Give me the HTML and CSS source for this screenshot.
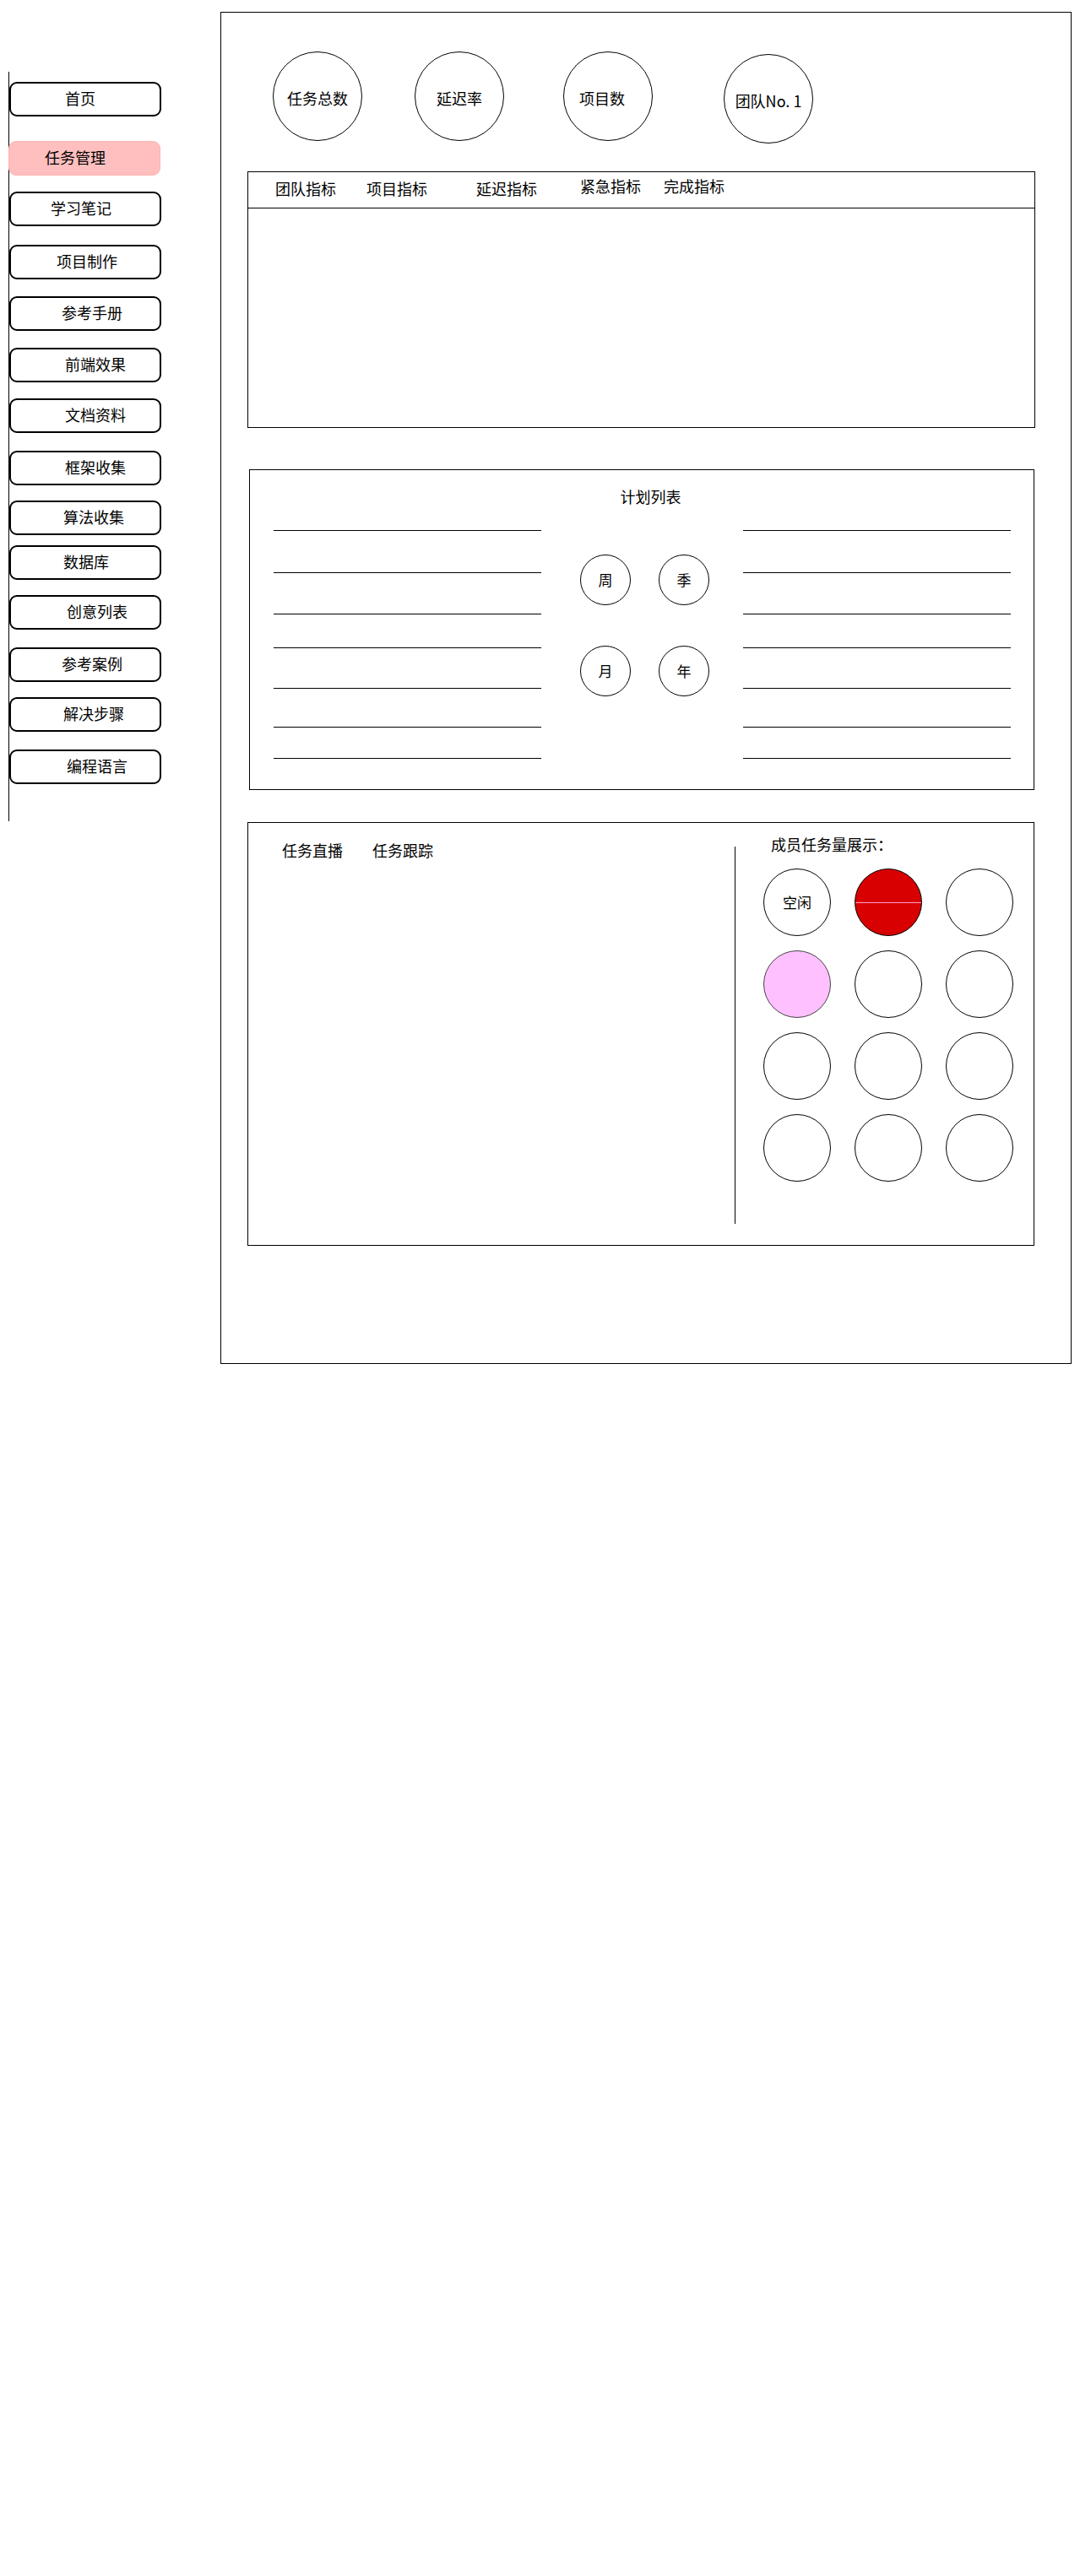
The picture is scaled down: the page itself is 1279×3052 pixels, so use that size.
FILE: index.html
```html
<!DOCTYPE html>
<html lang="zh-CN">
<head>
<meta charset="utf-8">
<title>任务管理</title>
<link rel="stylesheet" href="styles.css">
</head>
<body>
<div class="page">
  <nav class="sidebar">
    <div class="nav-item">首页</div>
    <div class="nav-item active">任务管理</div>
    <div class="nav-item">学习笔记</div>
    <div class="nav-item">项目制作</div>
    <div class="nav-item">参考手册</div>
    <div class="nav-item">前端效果</div>
    <div class="nav-item">文档资料</div>
    <div class="nav-item">框架收集</div>
    <div class="nav-item">算法收集</div>
    <div class="nav-item">数据库</div>
    <div class="nav-item">创意列表</div>
    <div class="nav-item">参考案例</div>
    <div class="nav-item">解决步骤</div>
    <div class="nav-item">编程语言</div>
  </nav>

  <main class="main">
    <section class="stats">
      <div class="stat">任务总数</div>
      <div class="stat">延迟率</div>
      <div class="stat">项目数</div>
      <div class="stat">团队No. 1</div>
    </section>

    <section class="indicators">
      <div class="ind-tabs">
        <span class="tab">团队指标</span>
        <span class="tab">项目指标</span>
        <span class="tab">延迟指标</span>
        <span class="tab">紧急指标</span>
        <span class="tab">完成指标</span>
      </div>
      <div class="ind-body"></div>
    </section>

    <section class="plan">
      <div class="plan-title">计划列表</div>
      <div class="plan-body">
        <div class="rules">
          <div class="rule"></div><div class="rule"></div><div class="rule"></div><div class="rule"></div><div class="rule"></div><div class="rule"></div><div class="rule"></div>
        </div>
        <div class="periods">
          <div class="period">周</div>
          <div class="period">季</div>
          <div class="period">月</div>
          <div class="period">年</div>
        </div>
        <div class="rules">
          <div class="rule"></div><div class="rule"></div><div class="rule"></div><div class="rule"></div><div class="rule"></div><div class="rule"></div><div class="rule"></div>
        </div>
      </div>
    </section>

    <section class="members">
      <div class="live">
        <span class="live-tab">任务直播</span>
        <span class="live-tab">任务跟踪</span>
      </div>
      <div class="divider"></div>
      <div class="load">
        <div class="load-title">成员任务量展示：</div>
        <div class="load-grid">
          <div class="member">空闲</div>
          <div class="member busy"></div>
          <div class="member"></div>
          <div class="member medium"></div>
          <div class="member"></div>
          <div class="member"></div>
          <div class="member"></div>
          <div class="member"></div>
          <div class="member"></div>
          <div class="member"></div>
          <div class="member"></div>
          <div class="member"></div>
        </div>
      </div>
    </section>
  </main>
</div>
</body>
</html>
```

FILE: styles.css
```css
* { box-sizing: border-box; }

html, body {
  margin: 0;
  padding: 0;
  background: #fff;
}

body {
  width: 1279px;
  min-height: 3052px;
  font-family: "Noto Sans CJK SC", "Noto Sans", sans-serif;
  font-size: 18px;
  line-height: 24px;
  color: #000;
}

.page {
  display: flex;
  align-items: flex-start;
}

/* ---------- sidebar ---------- */
.sidebar {
  margin-left: 10px;
  margin-top: 85px;
  width: 181px;
  height: 888px;
  border-left: 1px solid #000;
  padding-top: 12px;
  display: flex;
  flex-direction: column;
}

.nav-item {
  width: 180px;
  height: 41px;
  border: 2px solid #000;
  border-radius: 9px;
  padding-top: 5px;
  margin-top: 20px;
  white-space: nowrap;
}

.nav-item:nth-child(1) { margin-top: 0; padding-left: 64px; }
.nav-item:nth-child(2) { margin-top: 29px; padding-left: 42px; }
.nav-item:nth-child(3) { margin-top: 19px; padding-left: 47px; }
.nav-item:nth-child(4) { margin-top: 22px; padding-left: 54px; }
.nav-item:nth-child(5) { padding-left: 60px; }
.nav-item:nth-child(6) { padding-left: 64px; }
.nav-item:nth-child(7) { margin-top: 19px; padding-left: 64px; }
.nav-item:nth-child(8) { margin-top: 21px; padding-left: 64px; }
.nav-item:nth-child(9) { margin-top: 18px; padding-left: 62px; }
.nav-item:nth-child(10) { margin-top: 12px; padding-left: 62px; }
.nav-item:nth-child(11) { margin-top: 18px; padding-left: 66px; }
.nav-item:nth-child(12) { margin-top: 21px; padding-left: 60px; }
.nav-item:nth-child(13) { margin-top: 18px; padding-left: 62px; }
.nav-item:nth-child(14) { margin-top: 21px; padding-left: 66px; }

.nav-item.active {
  margin-left: -1px;
  background: #ffbfbf;
  border-color: #ffb3b3;
  border-width: 1px;
  padding-top: 6px;
}

/* ---------- main frame ---------- */
.main {
  margin-left: 70px;
  margin-top: 14px;
  width: 1008px;
  height: 1602px;
  border: 1px solid #000;
}

/* stat circles */
.stats {
  display: flex;
  align-items: flex-start;
  padding-top: 46px;
  padding-left: 61px;
  height: 155px;
}

.stat {
  width: 106px;
  height: 106px;
  border: 1px solid #000;
  border-radius: 50%;
  display: flex;
  align-items: center;
  justify-content: center;
  padding-top: 4px;
  white-space: nowrap;
}

.stat:nth-child(2) { margin-left: 62px; }
.stat:nth-child(3) { margin-left: 70px; padding-right: 14px; }
.stat:nth-child(4) { margin-left: 84px; margin-top: 3px; }

/* indicators */
.indicators {
  margin-top: 33px;
  margin-left: 31px;
  width: 933px;
  height: 304px;
  border: 1px solid #000;
}

.ind-tabs {
  display: flex;
  align-items: flex-start;
  height: 43px;
  padding-top: 7px;
  border-bottom: 1px solid #000;
}

.tab { white-space: nowrap; }
.tab:nth-child(1) { margin-left: 32px; }
.tab:nth-child(2) { margin-left: 36px; }
.tab:nth-child(3) { margin-left: 58px; }
.tab:nth-child(4) { margin-left: 51px; margin-top: -3px; }
.tab:nth-child(5) { margin-left: 27px; margin-top: -3px; }

/* plan list */
.plan {
  margin-top: 49px;
  margin-left: 33px;
  width: 930px;
  height: 380px;
  border: 1px solid #000;
}

.plan-title {
  padding-top: 19px;
  padding-left: 21px;
  text-align: center;
  height: 43px;
}

.plan-body {
  display: flex;
  align-items: flex-start;
  padding-left: 28px;
}

.rules {
  width: 317px;
  display: flex;
  flex-direction: column;
}

.rule {
  height: 1px;
  background: #000;
}

.rule:nth-child(1) { margin-top: 28px; }
.rule:nth-child(2) { margin-top: 49px; }
.rule:nth-child(3) { margin-top: 48px; }
.rule:nth-child(4) { margin-top: 39px; }
.rule:nth-child(5) { margin-top: 47px; }
.rule:nth-child(6) { margin-top: 45px; }
.rule:nth-child(7) { margin-top: 36px; }

.periods {
  width: 239px;
  padding-top: 57px;
  padding-left: 46px;
  display: grid;
  grid-template-columns: 60px 60px;
  grid-auto-rows: 60px;
  column-gap: 33px;
  row-gap: 48px;
}

.period {
  border: 1px solid #000;
  border-radius: 50%;
  display: flex;
  align-items: center;
  justify-content: center;
  font-size: 17px;
}

/* members */
.members {
  margin-top: 38px;
  margin-left: 31px;
  width: 932px;
  height: 502px;
  border: 1px solid #000;
  display: flex;
  align-items: flex-start;
}

.live {
  width: 576px;
  padding-top: 20px;
  padding-left: 40px;
  display: flex;
}

.live-tab { white-space: nowrap; }
.live-tab + .live-tab { margin-left: 35px; }

.divider {
  width: 1px;
  height: 447px;
  margin-top: 28px;
  background: #000;
}

.load {
  flex: 1;
  padding-top: 13px;
}

.load-title {
  padding-left: 42px;
  white-space: nowrap;
}

.load-grid {
  margin-top: 17px;
  margin-left: 33px;
  display: grid;
  grid-template-columns: repeat(3, 80px);
  grid-auto-rows: 80px;
  column-gap: 28px;
  row-gap: 17px;
}

.member {
  position: relative;
  border: 1px solid #000;
  border-radius: 50%;
  display: flex;
  align-items: center;
  justify-content: center;
  font-size: 17px;
}

.member.busy {
  background: #d80000;
  overflow: hidden;
}

.member.busy::after {
  content: "";
  position: absolute;
  left: 0;
  right: 0;
  top: 50%;
  height: 1px;
  background: #ff9fcf;
}

.member.medium {
  background: #ffc0ff;
  border-color: #444;
}
```
